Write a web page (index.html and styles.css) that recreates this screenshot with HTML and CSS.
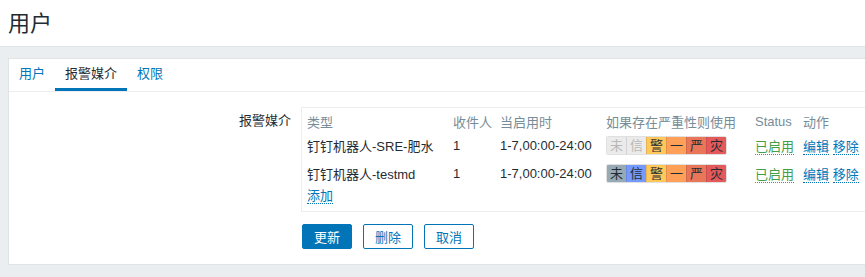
FILE: index.html
```html
<!DOCTYPE html>
<html lang="zh-CN">
<head>
    <meta charset="UTF-8">
    <title>用户</title>
    <link rel="stylesheet" href="styles.css">
</head>
<body>
    <header class="page-header">
        <h1>用户</h1>
    </header>
    <main class="wrapper">
        <div class="card">
            <ul class="tabs">
                <li><a href="#">用户</a></li>
                <li class="active"><a href="#">报警媒介</a></li>
                <li><a href="#">权限</a></li>
            </ul>
            <div class="form">
                <div class="form-row">
                    <label class="form-label">报警媒介</label>
                    <div class="form-field">
                        <div class="media-box">
                            <table class="media-table">
                                <colgroup>
                                    <col style="width:146px">
                                    <col style="width:47px">
                                    <col style="width:106px">
                                    <col style="width:149px">
                                    <col style="width:48px">
                                    <col>
                                </colgroup>
                                <thead>
                                    <tr>
                                        <th>类型</th>
                                        <th>收件人</th>
                                        <th>当启用时</th>
                                        <th>如果存在严重性则使用</th>
                                        <th>Status</th>
                                        <th>动作</th>
                                    </tr>
                                </thead>
                                <tbody>
                                    <tr>
                                        <td>钉钉机器人-SRE-肥水</td>
                                        <td>1</td>
                                        <td>1-7,00:00-24:00</td>
                                        <td>
                                            <div class="sev">
                                                <span class="off">未</span><span class="off">信</span><span class="warn">警</span><span class="avg">一</span><span class="high">严</span><span class="dis">灾</span>
                                            </div>
                                        </td>
                                        <td><a href="#" class="link green">已启用</a></td>
                                        <td><a href="#" class="link">编辑</a> <a href="#" class="link">移除</a></td>
                                    </tr>
                                    <tr>
                                        <td>钉钉机器人-testmd</td>
                                        <td>1</td>
                                        <td>1-7,00:00-24:00</td>
                                        <td>
                                            <div class="sev">
                                                <span class="nc">未</span><span class="info">信</span><span class="warn">警</span><span class="avg">一</span><span class="high">严</span><span class="dis">灾</span>
                                            </div>
                                        </td>
                                        <td><a href="#" class="link green">已启用</a></td>
                                        <td><a href="#" class="link">编辑</a> <a href="#" class="link">移除</a></td>
                                    </tr>
                                </tbody>
                            </table>
                            <div class="add-row"><a href="#" class="link">添加</a></div>
                        </div>
                    </div>
                </div>
                <div class="buttons">
                    <button class="btn primary">更新</button>
                    <button class="btn">删除</button>
                    <button class="btn">取消</button>
                </div>
            </div>
        </div>
    </main>
</body>
</html>
```

FILE: styles.css
```css
* {
    box-sizing: border-box;
    margin: 0;
    padding: 0;
}

body {
    font-family: "Liberation Sans", Arial, "Noto Sans CJK SC", sans-serif;
    font-size: 13px;
    color: #1f2c33;
    background-color: #ebeef0;
    overflow: hidden;
    height: 277px;
}

.page-header {
    background: #fff;
    height: 47px;
    border-bottom: 1px solid #dfe4e7;
    padding: 11px 0 0 8px;
}

.page-header h1 {
    font-size: 22px;
    font-weight: normal;
    line-height: 26px;
    color: #1f2c33;
}

.wrapper {
    padding: 11px 0 0 8px;
    width: 1100px;
}

.card {
    background: #fff;
    border: 1px solid #dfe4e7;
    height: 207px;
}

.tabs {
    list-style: none;
    display: flex;
    height: 33px;
    border-bottom: 1px solid #ebeef0;
}

.tabs li a {
    display: block;
    padding: 0 10px;
    line-height: 30px;
    height: 32px;
    color: #0275b8;
    text-decoration: none;
    border-bottom: 3px solid transparent;
}

.tabs li.active a {
    color: #1f2c33;
    border-bottom-color: #0275b8;
}

.form {
    padding-top: 15px;
}

.form-row {
    display: flex;
}

.form-label {
    width: 282px;
    text-align: right;
    padding-top: 6px;
    line-height: 16px;
}

.form-field {
    padding-left: 10px;
}

.media-box {
    border: 1px solid #ebeef0;
    padding: 0 0 4px 5px;
    width: 620px;
}

.media-table {
    border-collapse: collapse;
    table-layout: fixed;
    width: 100%;
}

.media-table th {
    font-weight: normal;
    color: #768d99;
    text-align: left;
    height: 23px;
    padding-top: 4px;
    white-space: nowrap;
}

.media-table td {
    height: 28px;
    white-space: nowrap;
    vertical-align: middle;
}

.sev {
    display: inline-flex;
    border: 1px solid rgba(0, 0, 0, 0.12);
    border-radius: 2px;
    overflow: hidden;
    vertical-align: middle;
}

.sev span {
    display: block;
    width: 20px;
    height: 17px;
    line-height: 17px;
    text-align: center;
    color: #1f2c33;
    border-left: 1px solid rgba(0, 0, 0, 0.1);
}

.sev span:first-child {
    border-left: none;
    width: 19px;
}

.sev .off { background: #ebebeb; color: #b8b8b8; }
.sev .nc { background: #97aab3; }
.sev .info { background: #7499ff; }
.sev .warn { background: #ffc859; }
.sev .avg { background: #ffa059; }
.sev .high { background: #e97659; }
.sev .dis { background: #e45959; }

.link {
    color: #0275b8;
    text-decoration: none;
    border-bottom: 1px dotted #0275b8;
}

.link.green {
    color: #429e47;
    border-bottom-color: #429e47;
}

.add-row {
    height: 20px;
    line-height: 18px;
}

.buttons {
    display: flex;
    gap: 11px;
    padding: 12px 0 0 293px;
}

.btn {
    font-family: inherit;
    font-size: 13px;
    height: 25px;
    padding: 0 11px;
    background: #fff;
    color: #0275b8;
    border: 1px solid #0275b8;
    border-radius: 2px;
    cursor: pointer;
}

.btn.primary {
    background: #0275b8;
    color: #fff;
}
```
